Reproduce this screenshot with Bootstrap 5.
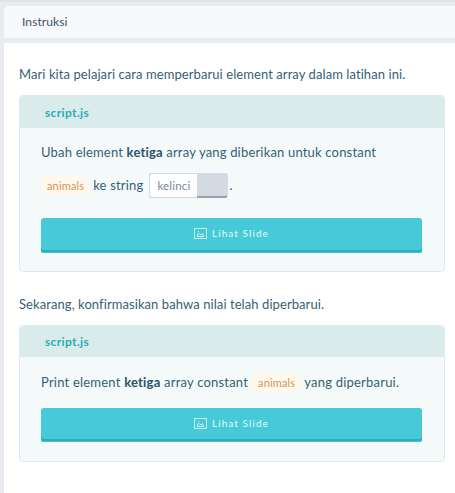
<!DOCTYPE html>
<html lang="id">
<head>
<meta charset="utf-8">
<meta name="viewport" content="width=device-width, initial-scale=1">
<title>Instruksi</title>
<link href="https://cdn.jsdelivr.net/npm/bootstrap@5.3.0/dist/css/bootstrap.min.css" rel="stylesheet">
<style>
body{font-family:Lato,sans-serif;background:#e8ebf0;color:#365f76;font-size:13px;height:493px;overflow:hidden}
.page-shell{height:493px;padding:6px 0 0 4px;box-shadow:inset 0 3px 2px -1px #dfe3e8}
.panel-head{height:32px;background:#f7f9fc;border-top-left-radius:5px;padding-left:18px;color:#3e5166;font-size:12px;letter-spacing:.1px}
.panel-main{margin-top:5px;padding:20px 10px 0 15px}
.intro{line-height:22px;letter-spacing:.075px;white-space:nowrap;margin-bottom:10px}
.intro-next{margin-top:21px}
.task{border:1px solid #d9ebea;border-radius:4px;background:#f4faf9}
.task-head{height:32px;background:#d9ebea;border:0;padding:2px 0 0 25px;color:#2aabb8;font-size:12px;font-weight:700;letter-spacing:.35px}
.task-main{padding:8px 22px 18px 21px}
.task-short .task-head{height:31px;padding-top:1px}
.task-short .task-main{padding-top:9px;padding-bottom:19px}
.line{height:33px;white-space:nowrap;letter-spacing:.18px}
.task-short .line{letter-spacing:.21px}
.line strong{color:#2a536b}
.token{background:#fff8ec;color:#d9954f;border-radius:4px;height:19px;padding:1px 5px 0 6px;font-size:11px;letter-spacing:.15px}
.gap-before-answer{margin-right:6px}
.stop{margin-left:1px}
.answer{width:79px;height:25px;background:#d3dae2;border:1px solid #d3dae2;border-bottom:2px solid #929fb2;border-radius:3px}
.answer-text{width:48px;height:25px;margin:-1px 0 0 -1px;background:#fff;border:1px solid #d3dae2;border-right:0;border-radius:3px 0 0 3px;color:#7d869b;font-size:11.5px}
.slide-btn,.slide-btn:hover{height:35px;margin-top:16px;background:#46cad7;color:#e5f9fb;border:0;border-radius:3px;box-shadow:inset 0 -1px #4bbdca,inset 0 -3px #28b0be;padding:0 0 4px;font-size:10px;letter-spacing:1.07px}
.task-short .slide-btn{height:34px;margin-top:9px;padding-bottom:3px}
.slide-icon{margin-right:5px;opacity:.85}
</style>
</head>
<body>
<div class="page-shell d-flex flex-column">
  <header class="panel-head d-flex align-items-center">Instruksi</header>
  <main class="panel-main bg-white flex-grow-1">
    <p class="intro">Mari kita pelajari cara memperbarui element array dalam latihan ini.</p>
    <section class="task card">
      <div class="task-head card-header d-flex align-items-center">script.js</div>
      <div class="task-main">
        <div class="line d-flex align-items-center"><span>Ubah element <strong>ketiga</strong> array yang diberikan untuk constant</span></div>
        <div class="line d-flex align-items-center">
          <span class="token d-flex align-items-center">animals</span>
          <span class="ms-1 gap-before-answer">ke string</span>
          <span class="answer d-flex"><span class="answer-text d-flex align-items-center justify-content-center">kelinci</span></span>
          <span class="stop">.</span>
        </div>
        <button class="slide-btn btn w-100 d-flex align-items-center justify-content-center" type="button">
          <svg class="slide-icon" width="13" height="11" viewBox="0 0 13 11" fill="none" stroke="currentColor" aria-hidden="true"><path d="M.5.5h12v10H.5zM3 8.5h7M3.5 8V6.5L5 5.5l2 1.5 1.5-1.5L9.5 8"/><path d="M4 3.5h1"/></svg>
          <span>Lihat Slide</span>
        </button>
      </div>
    </section>
    <p class="intro intro-next">Sekarang, konfirmasikan bahwa nilai telah diperbarui.</p>
    <section class="task task-short card">
      <div class="task-head card-header d-flex align-items-center">script.js</div>
      <div class="task-main">
        <div class="line d-flex align-items-center">
          <span>Print element <strong>ketiga</strong> array constant</span>
          <span class="token d-flex align-items-center ms-1">animals</span>
          <span class="ms-1">yang diperbarui.</span>
        </div>
        <button class="slide-btn btn w-100 d-flex align-items-center justify-content-center" type="button">
          <svg class="slide-icon" width="13" height="11" viewBox="0 0 13 11" fill="none" stroke="currentColor" aria-hidden="true"><path d="M.5.5h12v10H.5zM3 8.5h7M3.5 8V6.5L5 5.5l2 1.5 1.5-1.5L9.5 8"/><path d="M4 3.5h1"/></svg>
          <span>Lihat Slide</span>
        </button>
      </div>
    </section>
  </main>
</div>
<script src="https://cdn.jsdelivr.net/npm/bootstrap@5.3.0/dist/js/bootstrap.bundle.min.js"></script>
</body>
</html>
